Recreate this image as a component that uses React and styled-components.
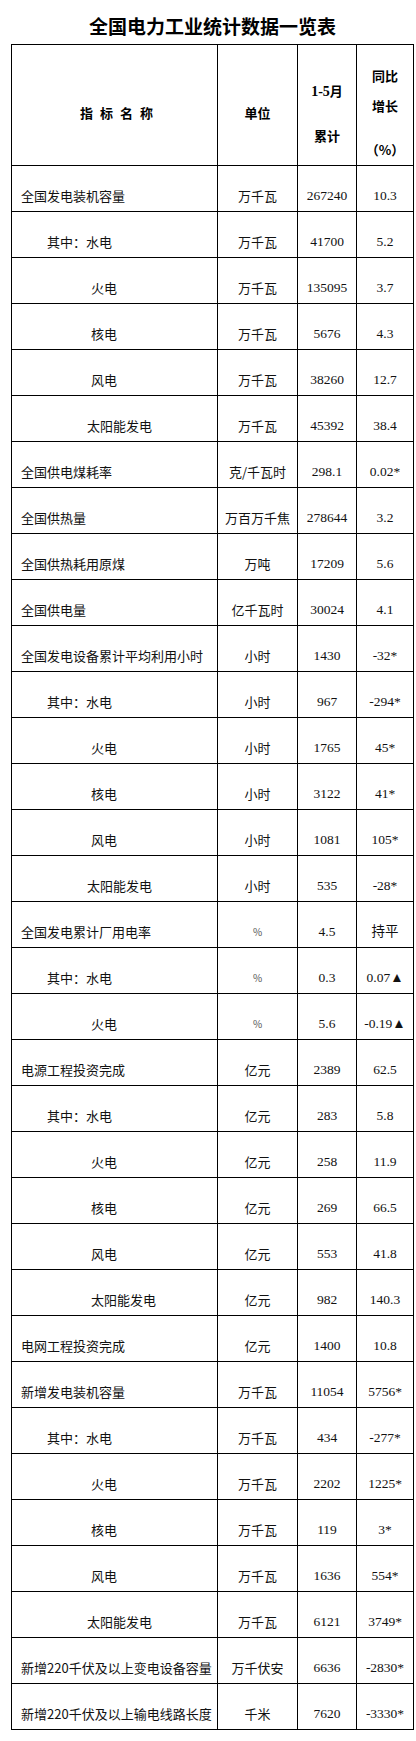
import React from 'react'
import styled, { createGlobalStyle } from 'styled-components';

const rows = [
  ['全国发电装机容量', 0, '万千瓦', '267240', '10.3'],
  ['其中：水电', 1, '万千瓦', '41700', '5.2'],
  ['火电', 2, '万千瓦', '135095', '3.7'],
  ['核电', 2, '万千瓦', '5676', '4.3'],
  ['风电', 2, '万千瓦', '38260', '12.7'],
  ['太阳能发电', 3, '万千瓦', '45392', '38.4'],
  ['全国供电煤耗率', 0, '克/千瓦时', '298.1', '0.02*'],
  ['全国供热量', 0, '万百万千焦', '278644', '3.2'],
  ['全国供热耗用原煤', 0, '万吨', '17209', '5.6'],
  ['全国供电量', 0, '亿千瓦时', '30024', '4.1'],
  ['全国发电设备累计平均利用小时', 0, '小时', '1430', '-32*'],
  ['其中：水电', 1, '小时', '967', '-294*'],
  ['火电', 2, '小时', '1765', '45*'],
  ['核电', 2, '小时', '3122', '41*'],
  ['风电', 2, '小时', '1081', '105*'],
  ['太阳能发电', 3, '小时', '535', '-28*'],
  ['全国发电累计厂用电率', 0, '%', '4.5', '持平'],
  ['其中：水电', 1, '%', '0.3', '0.07▲'],
  ['火电', 2, '%', '5.6', '-0.19▲'],
  ['电源工程投资完成', 0, '亿元', '2389', '62.5'],
  ['其中：水电', 1, '亿元', '283', '5.8'],
  ['火电', 2, '亿元', '258', '11.9'],
  ['核电', 2, '亿元', '269', '66.5'],
  ['风电', 2, '亿元', '553', '41.8'],
  ['太阳能发电', 2, '亿元', '982', '140.3'],
  ['电网工程投资完成', 0, '亿元', '1400', '10.8'],
  ['新增发电装机容量', 0, '万千瓦', '11054', '5756*'],
  ['其中：水电', 1, '万千瓦', '434', '-277*'],
  ['火电', 2, '万千瓦', '2202', '1225*'],
  ['核电', 2, '万千瓦', '119', '3*'],
  ['风电', 2, '万千瓦', '1636', '554*'],
  ['太阳能发电', 3, '万千瓦', '6121', '3749*'],
  ['新增220千伏及以上变电设备容量', 0, '万千伏安', '6636', '-2830*'],
  ['新增220千伏及以上输电线路长度', 0, '千米', '7620', '-3330*'],
];

const indents = [9, 35, 79, 75];

const App = () => {
  return (
    <Page>
      <GlobalStyle />
      <Title>全国电力工业统计数据一览表</Title>
      <Table>
        <colgroup>
          <col style={{ width: 206 }} />
          <col style={{ width: 80 }} />
          <col style={{ width: 59 }} />
          <col style={{ width: 57 }} />
        </colgroup>
        <thead>
          <tr>
            <HeadCell $spaced>指 标 名 称</HeadCell>
            <HeadCell>单位</HeadCell>
            <HeadCell>
              <HeadLine $h={45}><Num>1-5</Num>月</HeadLine>
              <HeadLine $h={45}>累计</HeadLine>
            </HeadCell>
            <HeadCell>
              <HeadLine $h={30}>同比</HeadLine>
              <HeadLine $h={44}>增长</HeadLine>
              <HeadLine $h={20}>（%）</HeadLine>
            </HeadCell>
          </tr>
        </thead>
        <tbody>
          {rows.map(([name, level, unit, total, growth], i) => (
            <Row key={i}>
              <NameCell $indent={indents[level]}>{name}</NameCell>
              <UnitCell $small={unit === '%'}>{unit}</UnitCell>
              <NumCell>{total}</NumCell>
              <NumCell>{growth}</NumCell>
            </Row>
          ))}
        </tbody>
      </Table>
    </Page>
  )
}

export default App

const GlobalStyle = createGlobalStyle`
  body {
    margin: 0;
    background: #fff;
    color: #000;
    font-family: "Noto Sans CJK SC", "Noto Sans", sans-serif;
  }
`;

const Page = styled.div`
  width: 416px;
  padding-top: 14px;
`;

const Title = styled.h1`
  margin: 0 0 6px;
  text-align: center;
  font-size: 19px;
  line-height: 24px;
  font-weight: 700;
  padding-left: 9px;
`;

const Table = styled.table`
  margin-left: 11px;
  border-collapse: collapse;
  table-layout: fixed;
  width: 403px;
`;

const HeadCell = styled.th`
  height: 121px;
  box-sizing: border-box;
  border: 1px solid #000;
  padding: 16px 0 0 ${({ $spaced }) => ($spaced ? '4px' : '0')};
  vertical-align: middle;
  text-align: center;
  font-size: 13px;
  font-weight: 700;
  line-height: 18px;
  word-spacing: ${({ $spaced }) => ($spaced ? '4px' : 'normal')};
`;

const HeadLine = styled.div`
  height: ${({ $h }) => $h}px;
  line-height: 18px;
  &:last-child { height: auto; }
`;

const Num = styled.span`
  font-family: "Liberation Serif", serif;
  font-size: 14px;
`;

const Row = styled.tr`
  height: 46px;
`;

const Cell = styled.td`
  border: 1px solid #000;
  padding: 0 0 6px;
  vertical-align: bottom;
  line-height: 18px;
  white-space: nowrap;
`;

const NameCell = styled(Cell)`
  padding-left: ${({ $indent }) => $indent}px;
  font-size: 13px;
  color: #111;
`;

const UnitCell = styled(Cell)`
  text-align: center;
  font-size: ${({ $small }) => ($small ? '10px' : '13px')};
  color: ${({ $small }) => ($small ? '#555' : '#111')};
`;

const NumCell = styled(Cell)`
  text-align: center;
  font-family: "Liberation Serif", "Noto Sans CJK SC", serif;
  font-size: 13.5px;
  color: #111;
`;
